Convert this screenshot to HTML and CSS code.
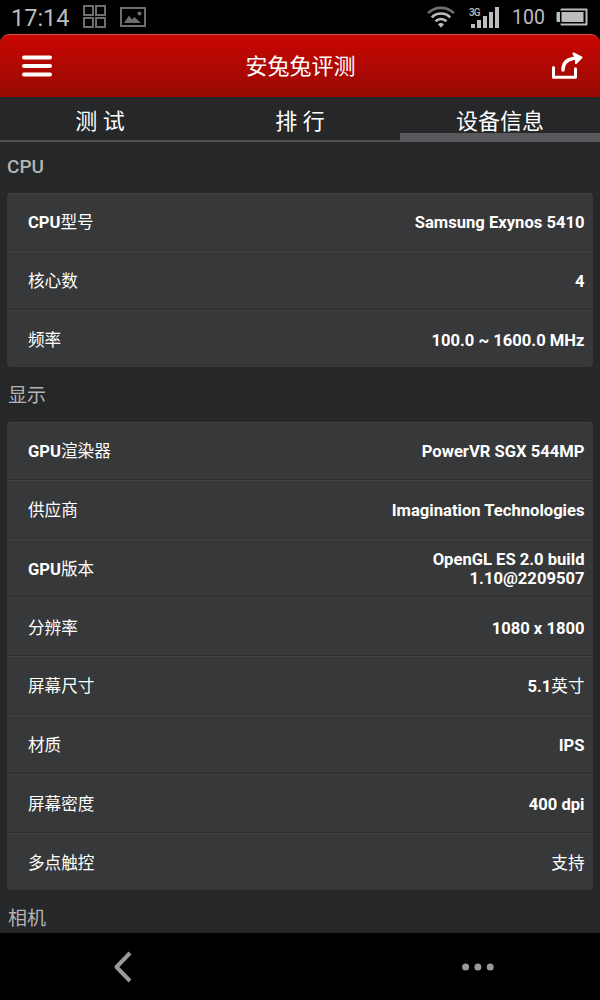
FILE: index.html
```html
<!DOCTYPE html>
<html lang="zh-CN">
  <head>
    <meta charset="UTF-8" />
    <meta name="viewport" content="width=device-width, initial-scale=1.0" />
    <title>安兔兔评测</title>
    <link rel="stylesheet" href="styles.css">
  </head>
  <body>

    <div class="status">
      <span class="time">17:14</span>
      <svg class="apps" width="24" height="24" fill="none" stroke="#6e6e6e" stroke-width="2">
        <path d="M1 1h9v9H1zM13 1h9v9h-9zM1 13h9v9H1zM13 13h9v9h-9z" />
      </svg>
      <svg class="photo" width="26" height="20">
        <rect x="1" y="1" width="24" height="18" fill="none" stroke="#6e6e6e" stroke-width="2" />
        <path d="M4 16l5-7.500 3 4 2.500-2.500 6.500 6z" fill="#6e6e6e" />
        <circle cx="19.500" cy="6.500" r="2" fill="#6e6e6e" />
      </svg>
      <svg class="wifi" width="28" height="22" fill="none" stroke-width="2.600">
        <path d="M1 7.200a18.500 18.500 0 0 1 26 0" stroke="#6f6f6f" />
        <path d="M4.800 11.300a13 13 0 0 1 18.400 0M8.600 15.200a7.700 7.700 0 0 1 10.800 0" stroke="#bdbdbd" />
        <path d="M11 18.200q3-2.400 6 0l-3 3.500z" fill="#bdbdbd" />
      </svg>
      <span class="signal">
        <span class="net">3G</span>
        <svg width="30" height="21" fill="#bdbdbd">
          <path d="M1 17h4v4H1zM7 13h4v8H7zM13 9h4v12h-4zM19 5h4v16h-4zM25 0h4v21h-4z" />
        </svg>
      </span>
      <span class="percent">100</span>
      <svg class="battery" width="34" height="18">
        <path d="M6 1h26v16H6v-3.500H2v-9h4z" fill="#bdbdbd" stroke="#bdbdbd" stroke-width="1" />
        <rect x="5" y="2.500" width="25.500" height="13" fill="#000" />
        <rect x="6.500" y="4" width="22" height="10" fill="#bdbdbd" />
      </svg>
    </div>

    <div class="header">
      <svg width="30" height="22" stroke="#fff" stroke-width="4" stroke-linecap="round">
        <path d="M2 2.500h26M2 11h26M2 19.500h26" />
      </svg>
      <h1>安兔兔评测</h1>
      <svg width="32" height="28" fill="none" stroke="#fff" stroke-width="3" stroke-linecap="round" stroke-linejoin="round">
        <path d="M2.500 15.500v9.800h22v-8.500" />
        <path d="M12 18C12 10.500 17 6.500 26 6" stroke-width="3.500" />
        <path d="M22.500 1.500l8 4-5.500 5.500 0-4.500z" fill="#fff" stroke-width="2" />
      </svg>
    </div>

    <div class="tabs">
      <div class="tab">测 试</div>
      <div class="tab">排 行</div>
      <div class="tab active">设备信息</div>
    </div>

    <div class="content">
      <h2>CPU</h2>
      <div class="card">
        <div class="row"><b>CPU<i>型号</i></b><b>Samsung Exynos 5410</b></div>
        <div class="row"><b><i>核心数</i></b><b>4</b></div>
        <div class="row"><b><i>频率</i></b><b>100.0 ~ 1600.0 MHz</b></div>
      </div>

      <h2>显示</h2>
      <div class="card">
        <div class="row"><b>GPU<i>渲染器</i></b><b>PowerVR SGX 544MP</b></div>
        <div class="row"><b><i>供应商</i></b><b>Imagination Technologies</b></div>
        <div class="row"><b>GPU<i>版本</i></b><b>OpenGL ES 2.0 build<br>1.10@2209507</b></div>
        <div class="row"><b><i>分辨率</i></b><b>1080 x 1800</b></div>
        <div class="row"><b><i>屏幕尺寸</i></b><b>5.1<i>英寸</i></b></div>
        <div class="row"><b><i>材质</i></b><b>IPS</b></div>
        <div class="row"><b><i>屏幕密度</i></b><b>400 dpi</b></div>
        <div class="row"><b><i>多点触控</i></b><b><i>支持</i></b></div>
      </div>

      <h2>相机</h2>
    </div>

    <div class="nav">
      <svg class="back" width="20" height="32" fill="none" stroke="#999" stroke-width="4" stroke-linecap="butt" stroke-linejoin="round">
        <path d="M17 2L3.500 16 17 30" />
      </svg>
      <svg class="more" width="32" height="8" fill="#999">
        <circle cx="3.600" cy="4" r="3.500" />
        <circle cx="15.900" cy="4" r="3.500" />
        <circle cx="28.200" cy="4" r="3.500" />
      </svg>
    </div>

  </body>
</html>
```
FILE: styles.css
```css
* {
    box-sizing: border-box;
}

body {
    display: flex;
    flex-direction: column;
    width: 600px;
    height: 1000px;
    margin: 0;
    overflow: hidden;
    background: #000;
    color: #fff;
    font-family: Roboto, "Noto Sans CJK SC", sans-serif;
}

.status {
    display: flex;
    align-items: center;
    height: 34px;
    padding: 0 11px 0 11px;
    color: #bdbdbd;
}

.time {
    width: 60px;
    margin: 2px 12px 0 0;
    font-size: 23.5px;
}

.photo {
    margin-left: 13px;
}

.wifi {
    margin-left: auto;
}

.signal {
    position: relative;
    height: 21px;
    margin: 0 0 0 15px;
}

.signal svg {
    display: block;
}

.net {
    position: absolute;
    left: -1px;
    top: 1px;
    font-size: 10px;
    font-weight: 500;
    line-height: 9px;
    letter-spacing: -1px;
}

.percent {
    width: 34px;
    margin: 1px 9px 0 12px;
    font-size: 19.5px;
}

.header {
    display: flex;
    align-items: center;
    justify-content: space-between;
    height: 63px;
    padding: 0 17px 0 22px;
    border-top: 1px solid #d9534f;
    border-radius: 9px 9px 0 0;
    background: linear-gradient(#c90703, #960a02);
}

h1 {
    margin: 0 2px 5px 0;
    font-size: 22px;
    font-weight: normal;
}

.tabs {
    display: flex;
    height: 45px;
    border-bottom: 2px solid #525355;
    background: #262729;
}

.tab {
    flex: 1;
    height: 45px;
    font-size: 22px;
    line-height: 49px;
    text-align: center;
}

.active {
    border-bottom: 9px solid #58595c;
}

.content {
    flex: 1;
    overflow: hidden;
    padding: 0 7px;
    background: #262729;
}

h2 {
    height: 54.3px;
    margin: 0;
    padding-left: 1px;
    color: #b4b4b4;
    font-size: 19px;
    font-weight: 400;
    line-height: 58px;
}

h2:first-child {
    height: 51px;
    padding-left: 0;
    font-weight: 500;
    line-height: 50px;
}

.card {
    overflow: hidden;
    border-radius: 3px;
    background: #373839;
}

.row {
    display: flex;
    align-items: center;
    justify-content: space-between;
    height: 58.8px;
    padding: 3px 8.5px 0 21px;
    border-top: 1px solid #414244;
    border-bottom: 1px solid #2d2e30;
    font-size: 16.6px;
    line-height: 19.5px;
    text-align: right;
}

.row i {
    font-style: normal;
    font-weight: 400;
}

.row:first-child {
    height: 58px;
    padding-top: 2px;
}

.row:last-child {
    height: 57.7px;
    border-bottom: 0;
}

.nav {
    display: flex;
    align-items: center;
    justify-content: space-between;
    height: 67px;
    padding: 0 106px 0 113px;
}
```
